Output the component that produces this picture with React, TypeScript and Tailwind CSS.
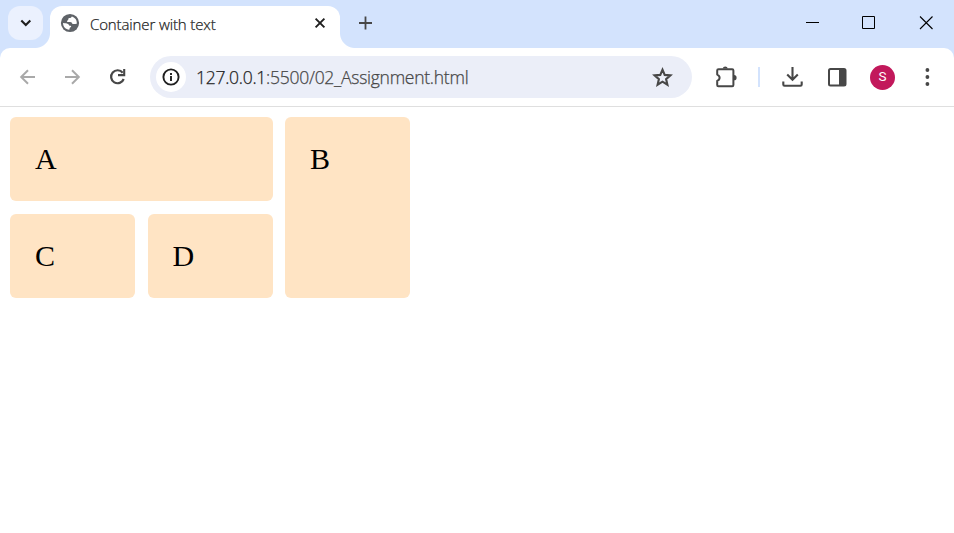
import type { ReactNode } from "react";

function Icon({ size, children, className = "" }: { size: number; children: ReactNode; className?: string }) {
  return (
    <svg width={size} height={size} viewBox={`0 0 ${size} ${size}`} fill="none" className={`block shrink-0 ${className}`}>
      {children}
    </svg>
  );
}

function TabStrip() {
  return (
    <div className="flex h-12 shrink-0">
      <div className="ml-2 mt-1.5 flex h-[34px] w-[35px] items-center justify-center rounded-xl bg-[#ebf1fe]">
        <Icon size={12}>
          <path d="M1.300 3.500 5.800 8l4.500-4.500" stroke="#1f1f1f" strokeWidth="2.1" />
        </Icon>
      </div>
      <div className="relative ml-[7px] mt-[5px] h-[43px] w-[291px] pt-px">
        <div className="absolute -left-[15px] bottom-0 h-[15px] w-[15px] bg-[radial-gradient(circle_at_0_0,transparent_14.5px,white_15.5px)]" />
        <div className="absolute -right-[14px] bottom-0 h-[15px] w-[15px] bg-[radial-gradient(circle_at_100%_0,transparent_14.5px,white_15.5px)]" />
        <div className="flex h-[42px] w-[290px] rounded-t-xl bg-white">
          <Icon size={20} className="ml-2.5 mt-[7px]">
            <circle cx="10" cy="10" r="9.1" fill="#5f6368" />
            <path d="M11.800 3.500c-.5 1.100-1.300 1.400-2.500 1.600-.9.100-1 .9-1 1.500-.1 1.100-1.300.8-1.400 1.700 0 .5.300.8.900.8 1.600.1 3.400-.3 4 .8.600 1 1.300 1.300 2.300 1.200 1 0 1.600-.4 2.700-.3.400-3.400-1.400-6.200-5-7.300z" fill="#fff" />
            <path d="M3.100 10.100c1.700.200 2.500-.1 3.800.3 1.500.5 2.400 1.300 2.500 2.400.8.100 1.700-.1 1.800.6.100.8-1.200.8-1.500 1.500-.3.600.1 1.200-.5 1.800C5.700 16.700 3 14 3.100 10.100z" fill="#fff" />
          </Icon>
          <span className="ml-2.5 mt-2 h-5 w-[215px] whitespace-nowrap font-['Open_Sans','Noto_Sans',sans-serif] text-[15px] font-light leading-5 tracking-[-0.12px] text-[#1f1f1f] [-webkit-text-stroke:0.25px_#1f1f1f]">
            Container with text
          </span>
          <Icon size={12} className="ml-[9px] mt-[11px]">
            <path d="m1.600 1.600 8.800 8.800m0-8.800-8.800 8.800" stroke="#1f1f1f" strokeWidth="1.9" />
          </Icon>
        </div>
      </div>
      <Icon size={14} className="ml-[17px] mt-4">
        <path d="M7.500.500v13M1 7h13" stroke="#474747" strokeWidth="1.8" />
      </Icon>
      <div className="ml-auto mr-[21px] mt-4 flex h-[14px]">
        <Icon size={14}><path d="M1 6.500h13" stroke="#000" /></Icon>
        <Icon size={14} className="ml-[42px]"><path d="M1.500.500h12v12h-12z" stroke="#000" /></Icon>
        <Icon size={14} className="ml-11"><path d="m1 .500 12.500 12.500m0-12.500L1 13" stroke="#000" strokeWidth="1.1" /></Icon>
      </div>
    </div>
  );
}

function Toolbar() {
  return (
    <div className="flex h-[59px] shrink-0 items-center rounded-t-[10px] border-b border-[#dfdfdf] bg-white">
      <div className="ml-[19px] flex items-center gap-[27px]">
        <Icon size={18}><path d="M16 9H2.500M9 2.200 2.200 9 9 15.800" stroke="#a9a9a9" strokeWidth="2" /></Icon>
        <Icon size={18}><path d="M1 9h13.500M8 2.200 14.800 9 8 15.800" stroke="#a9a9a9" strokeWidth="2" /></Icon>
        <Icon size={18}>
          <path d="M13.700 4.700A6.500 6.500 0 1 0 14.700 11" stroke="#474747" strokeWidth="2.200" />
          <path d="M15.200 1v6.100H9" stroke="#474747" strokeWidth="2.100" />
        </Icon>
      </div>
      <div className="ml-[23px] flex h-[42px] w-[542px] items-center rounded-full bg-[#ebeef8]">
        <div className="ml-1.5 flex h-[30px] w-[30px] items-center justify-center rounded-full bg-white">
          <Icon size={18}>
            <circle cx="9" cy="9" r="7.600" stroke="#1f1f1f" strokeWidth="1.900" />
            <path d="M9 8v5M9 5v2" stroke="#1f1f1f" strokeWidth="1.900" />
          </Icon>
        </div>
        <div className="ml-2.5 w-[455px] whitespace-nowrap font-['Open_Sans','Noto_Sans',sans-serif] text-[17.5px] font-light leading-6 tracking-[-0.26px] text-[#474747] [-webkit-text-stroke:0.25px_currentColor]">
          <span className="text-[#1f1f1f]">127.0.0.1</span>:5500/02_Assignment.html
        </div>
        <Icon size={22}>
          <path d="m11.500 3.700 2.200 5.200 5.700.5-4.300 3.700 1.300 5.600-4.900-3-4.900 3 1.300-5.600-4.300-3.700 5.700-.5z" stroke="#474747" strokeWidth="2.100" />
        </Icon>
      </div>
      <Icon size={24} className="ml-[23px]">
        <path d="M3.500 4.300q-1.300 0-1.300 1.200v4.100q2.400 1 2.400 3.100t-2.400 3.100v4.200q0 1.200 1.200 1.200h13.800q1.200 0 1.200-1.200V5.500q0-1.200-1.200-1.200z" stroke="#474747" strokeWidth="2" strokeLinejoin="round" />
        <path d="M7.700 3.500a2.600 2.600 0 0 1 5.100 0zM19 10.100a2.600 2.600 0 0 1 0 5.200z" fill="#474747" />
      </Icon>
      <div className="ml-[19px] h-5 w-0.5 bg-[#d3e3fd]" />
      <Icon size={22} className="ml-[21px]">
        <path d="M11.500 1v12.500M6.200 8.500l5.300 5.300 5.300-5.300M2.300 15.500v3q0 1.200 1.200 1.200h16q1.200 0 1.200-1.200v-3" stroke="#474747" strokeWidth="2.100" />
      </Icon>
      <Icon size={20} className="ml-6">
        <rect x="2" y="2" width="16.500" height="16.500" rx="1.500" stroke="#474747" strokeWidth="2" />
        <path d="M12 2h6.500v16H12z" fill="#474747" />
      </Icon>
      <div className="ml-[23px] flex h-[25px] w-[25px] items-center justify-center rounded-full bg-[#c2185b] font-[Roboto,sans-serif] text-[13.5px] leading-none text-white">
        S
      </div>
      <Icon size={18} className="ml-[23px]">
        <circle cx="9.400" cy="2" r="1.900" fill="#474747" />
        <circle cx="9.400" cy="9" r="1.900" fill="#474747" />
        <circle cx="9.400" cy="16" r="1.900" fill="#474747" />
      </Icon>
    </div>
  );
}

function Box({ label, className = "" }: { label: string; className?: string }) {
  return <div className={`rounded-md bg-[#ffe4c4] p-[25px] leading-[34px] ${className}`}>{label}</div>;
}

export default function App() {
  return (
    <div className="flex h-[533px] w-[954px] flex-col overflow-hidden bg-[#d3e3fd]">
      <TabStrip />
      <Toolbar />
      <div className="flex-1 bg-white px-2.5 pt-2.5">
        <div className="grid w-[400px] grid-cols-3 grid-rows-[84px_84px] gap-x-[12.5px] gap-y-[13px] font-['Liberation_Serif',serif] text-[30px] text-black">
          <Box label="A" className="col-span-2" />
          <Box label="B" className="row-span-2" />
          <Box label="C" />
          <Box label="D" />
        </div>
      </div>
    </div>
  );
}
